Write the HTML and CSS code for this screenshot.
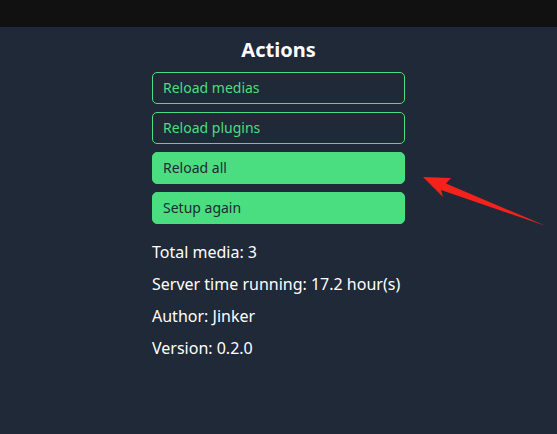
FILE: index.html
```html
<!DOCTYPE html>
<html lang="en">
<head>
    <meta charset="UTF-8">
    <meta name="viewport" content="width=device-width, initial-scale=1.0">
    <title>Actions</title>
    <link rel="stylesheet" href="styles.css">
</head>
<body>
    <div class="topbar"></div>
    <main>
        <div class="actions">
            <h1>Actions</h1>
            <div class="buttons">
                <button class="btn outline">Reload medias</button>
                <button class="btn outline">Reload plugins</button>
                <button class="btn solid">Reload all</button>
                <button class="btn solid">Setup again</button>
            </div>
            <div class="info">
                <p>Total media: 3</p>
                <p>Server time running: 17.2 hour(s)</p>
                <p>Author: Jinker</p>
                <p>Version: 0.2.0</p>
            </div>
        </div>
    </main>
    <svg class="arrow" width="557" height="434" viewBox="0 0 557 434">
        <polygon points="423,177 451,178 446,183.5 546,226 441,190 443,197" fill="#f5221b"/>
    </svg>
</body>
</html>
```

FILE: styles.css
```css
body {
    font-family: "Noto Sans", "Open Sans", sans-serif;
    margin: 0;
    padding: 0;
    background-color: #1f2937;
    color: #fff;
    height: 434px;
    overflow: hidden;
}

.topbar {
    height: 27px;
    background-color: #111111;
}

.actions {
    width: 253px;
    margin: 0 auto;
}

.actions h1 {
    margin: 8px 0 8px;
    font-size: 20px;
    line-height: 29px;
    text-align: center;
    font-weight: 700;
}

.buttons {
    display: flex;
    flex-direction: column;
    gap: 8px;
}

.btn {
    height: 32px;
    padding: 0 10px 1px;
    text-align: left;
    font-family: inherit;
    font-size: 14px;
    border-radius: 5px;
    border: 1px solid #4ade80;
    cursor: pointer;
}

.btn.outline {
    background-color: transparent;
    color: #4ade80;
}

.btn.solid {
    background-color: #4ade80;
    color: #1f2937;
}

.info {
    margin-top: 12px;
}

.info p {
    margin: 0;
    font-size: 16px;
    line-height: 32px;
}

.arrow {
    position: absolute;
    top: 0;
    left: 0;
    pointer-events: none;
}
```
